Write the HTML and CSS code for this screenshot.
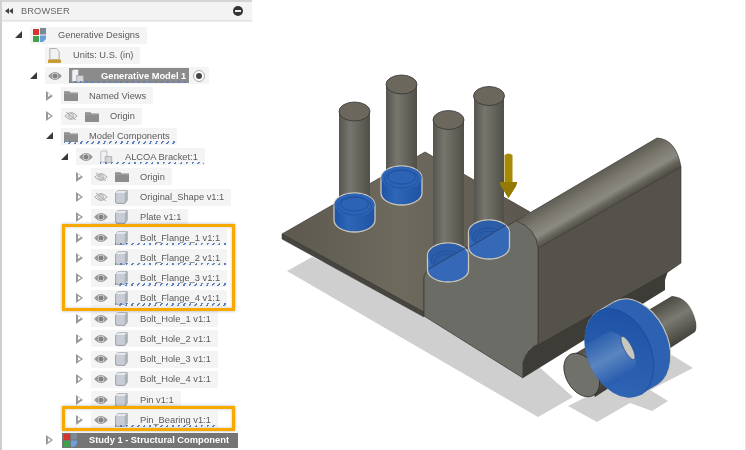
FILE: index.html
```html
<!DOCTYPE html>
<html lang="en">
<head>
<meta charset="utf-8">
<title>Browser</title>
<link rel="stylesheet" href="styles.css">
</head>
<body>
<svg class="defs" width="0" height="0" aria-hidden="true">
  <symbol id="eye" viewBox="0 0 14 10"><path d="M.2 5Q7-2.8 13.800 5 7 12.800.2 5Z" fill="#979797"/><circle cx="7" cy="5" r="3.200" fill="#dcdcdc"/><circle cx="7" cy="5" r="2.500" fill="#828282"/></symbol>
  <symbol id="eyeoff" viewBox="0 0 14 10"><path d="M.8 5Q7-2 13.200 5 7 12 .8 5Z" fill="#e4e4e4" stroke="#b2b2b2"/><circle cx="7" cy="5" r="2.400" fill="none" stroke="#b2b2b2"/><path d="M2 1 12 9" stroke="#aaa"/></symbol>
  <symbol id="folder" viewBox="0 0 14 11"><path d="M0 1.200h5.500l1 1.300H14V11H0Z" fill="#8d8d8d"/><path d="M0 3.400h14" stroke="#a5a5a5" stroke-width=".7"/></symbol>
  <symbol id="box" viewBox="0 0 13 14"><path d="M.6 3 3.200.6h9v9.600L9.800 13.400H1.800Q.6 13.400.6 12Z" fill="#c8cdd5" stroke="#8d9199" stroke-width=".8"/><path d="M.8 3H9.800L12 .8H3.200Z" fill="#e6e8ec"/><path d="M9.800 3 12 .8v9.300l-2.200 3.100Z" fill="#adb1b8"/></symbol>
  <symbol id="comp" viewBox="0 0 15 15"><path d="M1 1.500 3 .5h5v13H1Z" fill="#f1f1f3" stroke="#9a9da3" stroke-width=".7"/><path d="M6 7h7.500v7H6Z" fill="#d4d6da" stroke="#8f9298" stroke-width=".7"/></symbol>
  <symbol id="gd" viewBox="0 0 13 14"><path d="M0 1h6v6H0Z" fill="#d7332f"/><path d="M7 0h6v6.500H7Z" fill="#7b8a94"/><path d="M0 8h6v6H0Z" fill="#3fa14a"/><path d="M7 7.500h6V11l-3 3H7Z" fill="#6a9fd8"/></symbol>
  <symbol id="doc" viewBox="0 0 14 16"><path d="M2 .5h7l3 3v9H2Z" fill="#f2f2f2" stroke="#a3a3a3" stroke-width=".9"/><path d="M0 12.500h14V16H0Z" fill="#c99a2e"/></symbol>
</svg>
<main class="app">
  <section class="panel">
    <header class="head">
      <span class="rew"><i></i><i></i></span>
      <span class="title">BROWSER</span>
      <span class="min"></span>
    </header>
    <div class="tree">
      <div class="row d0"><span class="tri on"></span><span class="chip"><svg class="ic"><use href="#gd"/></svg><span>Generative Designs</span></span></div>
      <div class="row d1"><span class="tri none"></span><span class="chip"><svg class="ic doc"><use href="#doc"/></svg><span>Units: U.S. (in)</span></span></div>
      <div class="row d1"><span class="tri on"></span><span class="chip chip-gm"><svg class="eye"><use href="#eye"/></svg><span class="bar bar-gm wv"><svg class="ic ic-b"><use href="#comp"/></svg><span>Generative Model 1</span></span><span class="radio"></span></span></div>
      <div class="row d2"><span class="tri"></span><span class="chip"><svg class="ic fo"><use href="#folder"/></svg><span>Named Views</span></span></div>
      <div class="row d2"><span class="tri"></span><span class="chip"><svg class="eye"><use href="#eyeoff"/></svg><svg class="ic fo"><use href="#folder"/></svg><span>Origin</span></span></div>
      <div class="row d2"><span class="tri on"></span><span class="chip"><span class="wv"><svg class="ic fo"><use href="#folder"/></svg><span>Model Components</span></span></span></div>
      <div class="row d3"><span class="tri on"></span><span class="chip"><svg class="eye"><use href="#eye"/></svg><span class="wv"><svg class="ic"><use href="#comp"/></svg><span>ALCOA Bracket:1</span></span></span></div>
      <div class="row d4"><span class="tri"></span><span class="chip"><svg class="eye"><use href="#eyeoff"/></svg><svg class="ic fo"><use href="#folder"/></svg><span>Origin</span></span></div>
      <div class="row d4"><span class="tri"></span><span class="chip"><svg class="eye"><use href="#eyeoff"/></svg><svg class="ic"><use href="#box"/></svg><span>Original_Shape v1:1</span></span></div>
      <div class="row d4"><span class="tri"></span><span class="chip"><svg class="eye"><use href="#eye"/></svg><svg class="ic"><use href="#box"/></svg><span>Plate v1:1</span></span></div>
      <div class="group group-4">
        <div class="row d4"><span class="tri"></span><span class="chip"><svg class="eye"><use href="#eye"/></svg><span class="wv"><svg class="ic"><use href="#box"/></svg><span>Bolt_Flange_1 v1:1</span></span></span></div>
        <div class="row d4"><span class="tri"></span><span class="chip"><svg class="eye"><use href="#eye"/></svg><span class="wv"><svg class="ic"><use href="#box"/></svg><span>Bolt_Flange_2 v1:1</span></span></span></div>
        <div class="row d4"><span class="tri"></span><span class="chip"><svg class="eye"><use href="#eye"/></svg><span class="wv"><svg class="ic"><use href="#box"/></svg><span>Bolt_Flange_3 v1:1</span></span></span></div>
        <div class="row d4"><span class="tri"></span><span class="chip"><svg class="eye"><use href="#eye"/></svg><span class="wv"><svg class="ic"><use href="#box"/></svg><span>Bolt_Flange_4 v1:1</span></span></span></div>
      </div>
      <div class="row d4"><span class="tri"></span><span class="chip"><svg class="eye"><use href="#eye"/></svg><svg class="ic"><use href="#box"/></svg><span>Bolt_Hole_1 v1:1</span></span></div>
      <div class="row d4"><span class="tri"></span><span class="chip"><svg class="eye"><use href="#eye"/></svg><svg class="ic"><use href="#box"/></svg><span>Bolt_Hole_2 v1:1</span></span></div>
      <div class="row d4"><span class="tri"></span><span class="chip"><svg class="eye"><use href="#eye"/></svg><svg class="ic"><use href="#box"/></svg><span>Bolt_Hole_3 v1:1</span></span></div>
      <div class="row d4"><span class="tri"></span><span class="chip"><svg class="eye"><use href="#eye"/></svg><svg class="ic"><use href="#box"/></svg><span>Bolt_Hole_4 v1:1</span></span></div>
      <div class="row d4"><span class="tri"></span><span class="chip"><svg class="eye"><use href="#eye"/></svg><svg class="ic"><use href="#box"/></svg><span>Pin v1:1</span></span></div>
      <div class="group group-1">
        <div class="row d4"><span class="tri"></span><span class="chip"><svg class="eye"><use href="#eye"/></svg><span class="wv"><svg class="ic"><use href="#box"/></svg><span>Pin_Bearing v1:1</span></span></span></div>
      </div>
      <div class="row d2"><span class="tri"></span><span class="bar bar-study"><svg class="ic ic-s"><use href="#gd"/></svg><span>Study 1 - Structural Component</span></span></div>
    </div>
  </section>
  <div class="scene">
    <svg class="model" viewBox="252 0 493 450" width="493" height="450" role="img" aria-label="Bracket model">
      <defs>
        <linearGradient id="cyl" x1="0" x2="1" y1="0" y2="0"><stop offset="0" stop-color="#55544d"/><stop offset=".35" stop-color="#77766e"/><stop offset=".6" stop-color="#69685f"/><stop offset="1" stop-color="#504f48"/></linearGradient>
        <linearGradient id="rib" gradientUnits="userSpaceOnUse" x1="583" y1="176" x2="604" y2="212"><stop offset="0" stop-color="#55534b"/><stop offset=".4" stop-color="#7a776d"/><stop offset=".7" stop-color="#8b8a82"/><stop offset=".85" stop-color="#65635a"/><stop offset="1" stop-color="#4d4b43"/></linearGradient>
        <linearGradient id="plate" gradientUnits="userSpaceOnUse" x1="300" y1="230" x2="520" y2="230"><stop offset="0" stop-color="#5f5b50"/><stop offset=".45" stop-color="#6f6a5e"/><stop offset="1" stop-color="#5c584f"/></linearGradient>
        <linearGradient id="pinG" gradientUnits="userSpaceOnUse" x1="622" y1="324" x2="645" y2="364"><stop offset="0" stop-color="#4b4942"/><stop offset=".45" stop-color="#7b7a72"/><stop offset="1" stop-color="#403e38"/></linearGradient>
        <linearGradient id="blueB" x1="0" x2="1" y1="0" y2="0"><stop offset="0" stop-color="#1d52a6"/><stop offset=".35" stop-color="#2f66b6"/><stop offset="1" stop-color="#1f53a3"/></linearGradient>
        <linearGradient id="ring" gradientUnits="userSpaceOnUse" x1="590" y1="320" x2="670" y2="370"><stop offset="0" stop-color="#1d52a6"/><stop offset="1" stop-color="#3166b5"/></linearGradient>
        <linearGradient id="thru" gradientUnits="userSpaceOnUse" x1="598" y1="338" x2="620" y2="378"><stop offset="0" stop-color="#2f62ae"/><stop offset=".5" stop-color="#5a85c0"/><stop offset="1" stop-color="#2a5eae"/></linearGradient>
        <clipPath id="c3"><path d="M426 270 469 245V230H420V280Z"/></clipPath>
        <clipPath id="c4"><path d="M468 248 507 224V210H460V255Z"/></clipPath>
        <clipPath id="face"><ellipse cx="619.500" cy="353" rx="47" ry="32" transform="rotate(65 619.500 353)"/></clipPath>
      </defs>

      <path d="M312 257 287 271 538 417 573 397 520 350Z" fill="#cfcfcf"/>
      <path d="M568 406 597 422 630 403 652 411 668 401 650 390 693 368 672 355 600 390Z" fill="#cfcfcf"/>

      <path d="M282 234 425 152 530 212 516 221 424 276V313Z" fill="url(#plate)" stroke="#3c3a35" stroke-width=".7"/>
      <path d="M282 234V239L424 317V312Z" fill="#47453f" stroke="#34322e" stroke-width=".5"/>

      <path d="M538 344 668 271 665 280V290L523 378V362Q527 347 538 344Z" fill="#3e3c37"/>
      <path d="M538 248 681 167V263L668 272 538 345Z" fill="#55524b" stroke="#34322e" stroke-width=".6"/>
      <path d="M516 221 657 138Q676 139 681 167L538 248Q536 228 516 221Z" fill="url(#rib)" stroke="#3a3833" stroke-width=".7"/>
      <path d="M424 278Q424 274 428 270L516 221Q536 228 538 248V344Q526 347 523 362V378L424 316Z" fill="#6b6c65" stroke="#3a3833" stroke-width=".7"/>

      <g class="posts">
        <rect x="339" y="111" width="31" height="100" fill="url(#cyl)"/>
        <ellipse cx="354.500" cy="111.500" rx="15.500" ry="9.500" fill="#6c675d" stroke="#333" stroke-width=".8"/>
        <rect x="386" y="84" width="31" height="90" fill="url(#cyl)"/>
        <ellipse cx="401.500" cy="84.500" rx="15.500" ry="9.500" fill="#6c675d" stroke="#333" stroke-width=".8"/>
        <rect x="433" y="120" width="31" height="130" fill="url(#cyl)"/>
        <ellipse cx="448.500" cy="120" rx="15.500" ry="9.500" fill="#6c675d" stroke="#333" stroke-width=".8"/>
        <rect x="474" y="96" width="30" height="130" fill="url(#cyl)"/>
        <ellipse cx="489" cy="96" rx="15.500" ry="9.500" fill="#6c675d" stroke="#333" stroke-width=".8"/>
      </g>

      <path d="M334 205V220A20.500 12 0 0 0 375 220V205A20.500 12 0 0 0 334 205Z" fill="url(#blueB)" stroke="#c9c6ba" stroke-width="1.300"/>
      <ellipse cx="354.500" cy="205" rx="20" ry="11.500" fill="#2d63b4"/>
      <ellipse cx="354.500" cy="206" rx="17" ry="9" fill="none" stroke="#1b4c9a" stroke-width=".7"/>
      <ellipse cx="354.500" cy="204" rx="14" ry="7" fill="none" stroke="#1b4c9a" stroke-width=".7"/>

      <path d="M381 178V193A20.500 12 0 0 0 422 193V178A20.500 12 0 0 0 381 178Z" fill="url(#blueB)" stroke="#c9c6ba" stroke-width="1.300"/>
      <ellipse cx="401.500" cy="178" rx="20" ry="11.500" fill="#2d63b4"/>
      <ellipse cx="401.500" cy="179" rx="17" ry="9" fill="none" stroke="#1b4c9a" stroke-width=".7"/>
      <ellipse cx="401.500" cy="177" rx="14" ry="7" fill="none" stroke="#1b4c9a" stroke-width=".7"/>

      <path d="M427.500 255V270A20.500 12 0 0 0 468.500 270V255A20.500 12 0 0 0 427.500 255Z" fill="#3568b6" stroke="#c9c6ba" stroke-width="1.300"/>
      <g clip-path="url(#c3)"><ellipse cx="448" cy="256" rx="20" ry="12.500" fill="#2c5da9"/><ellipse cx="448" cy="261" rx="17" ry="10" fill="none" stroke="#1b4c9a" stroke-width=".6"/><ellipse cx="448" cy="263" rx="14" ry="9" fill="none" stroke="#1b4c9a" stroke-width=".6"/></g>
      <path d="M428.500 269 467 247" stroke="#24395f" stroke-width=".8"/>

      <path d="M468.500 232V247A20.500 12 0 0 0 509.500 247V232A20.500 12 0 0 0 468.500 232Z" fill="#3568b6" stroke="#c9c6ba" stroke-width="1.300"/>
      <g clip-path="url(#c4)"><ellipse cx="489" cy="233" rx="20" ry="12.500" fill="#2c5da9"/><ellipse cx="489" cy="238" rx="17" ry="10" fill="none" stroke="#1b4c9a" stroke-width=".6"/><ellipse cx="489" cy="240" rx="14" ry="9" fill="none" stroke="#1b4c9a" stroke-width=".6"/></g>
      <path d="M470 247 506 225" stroke="#24395f" stroke-width=".8"/>

      <path d="M504.500 155Q508.500 152 512.500 155V182H517L516 186 508.500 198 501 186 500 182H504.500Z" fill="#a68a04"/>
      <path d="M500 182H517L516 186 508.500 198 501 186Z" fill="#947a03"/>

      <path d="M576 353 672 296Q690 297 696 322 697 329 695 332L595 397Z" fill="url(#pinG)"/>
      <ellipse cx="581.700" cy="375" rx="23.500" ry="15.500" transform="rotate(60 581.700 375)" fill="#70716b" stroke="#2f2e2a" stroke-width=".8"/>

      <path d="M641.200 394.600 658.200 384.600A47 32 65 0 0 614.800 301.400L597.800 311.400A47 32 65 0 0 641.200 394.600Z" fill="#2d61b1" stroke="#cbc9bf" stroke-width="1.100"/>
      <ellipse cx="619.500" cy="353" rx="47" ry="32" transform="rotate(65 619.500 353)" fill="url(#ring)"/>
      <path d="M597.800 311.400A47 32 65 0 1 641.200 394.600" fill="none" stroke="#1a4b98" stroke-width=".7"/>
      <path d="M584 345 610 331Q628 335 636 360 636 368 633 370L608 388 590 370Z" fill="url(#thru)" clip-path="url(#face)"/>
      <ellipse cx="628" cy="348" rx="13" ry="4" transform="rotate(62 628 348)" fill="#c9c8bf" stroke="#1f4a8e" stroke-width=".7"/>
    </svg>
  </div>
</main>
</body>
</html>
```
FILE: styles.css
```css
*, *::before, *::after { box-sizing: border-box; }
html, body { margin: 0; padding: 0; background: #fff; }
body { width: 746px; height: 450px; overflow: hidden; font-family: "Liberation Sans", Arial, sans-serif; }
.defs { position: absolute; }
.app { display: flex; width: 746px; height: 450px; }

.panel { width: 252px; flex: none; border-left: 2px solid #cfcfcf; border-top: 2px solid #d4d4d4; filter: blur(.35px); }
.head { height: 19px; display: flex; align-items: center; background: #f3f3f3; border-bottom: 1px solid #e2e2e2; padding: 0 8px 0 3px; color: #666; font-size: 9.300px; box-shadow: 0 1px 1px #eee; }
.rew { display: flex; width: 16px; }
.rew i { width: 0; height: 0; border: 3px solid transparent; border-left: 0; border-right: 4px solid #444; }
.title { flex: 1; letter-spacing: .1px; }
.min { width: 10px; height: 10px; border-radius: 50%; background: #333; position: relative; margin-right: 1px; }
.min::after { content: ""; position: absolute; left: 2px; right: 2px; top: 4px; height: 1.500px; background: #eee; }

.tree { padding-top: 4px; }
.row { height: 20.250px; display: flex; align-items: center; font-size: 9.300px; color: #5a5a5a; white-space: nowrap; }
.d0 { padding-left: 13px; }
.d1 { padding-left: 28px; }
.d2 { padding-left: 44px; }
.d3 { padding-left: 59px; }
.d4 { padding-left: 74px; }

.tri { width: 15px; height: 10px; flex: none; position: relative; }
.tri::before { content: ""; position: absolute; left: 0; top: 0; width: 0; height: 0; border-left: 7px solid #999; border-top: 5px solid transparent; border-bottom: 5px solid transparent; }
.tri::after { content: ""; position: absolute; left: 1.500px; top: 2.500px; width: 0; height: 0; border-left: 3.300px solid #fff; border-top: 2.500px solid transparent; border-bottom: 2.500px solid transparent; }
.tri.on::before { left: 0; top: 1px; border: 0; border-right: 7px solid #3a3a3a; border-top: 7px solid transparent; }
.tri.on::after, .tri.none::before, .tri.none::after { display: none; }

.chip { height: 17px; display: inline-flex; align-items: center; background: #f4f4f4; padding: 0 7px 0 3px; }
.eye { width: 14px; height: 10px; margin-right: 7px; flex: none; }
.ic { width: 13px; height: 14px; margin-right: 12px; flex: none; }
.ic.doc { width: 13px; height: 15px; }
.ic.fo { width: 14px; height: 11px; margin-right: 11px; }
.ic-b { margin-right: 16px; width: 14px; margin-left: 2px; }
.ic-s { margin: 0 12px 0 2px; }

.wv { position: relative; display: inline-flex; align-items: center; height: 100%; }
.wv::after { content: ""; position: absolute; left: 0; right: -6px; bottom: 1px; height: 2.500px; background: repeating-linear-gradient(120deg, #5a80bd 0 1.500px, transparent 1.500px 5px); }

.chip-gm { padding-right: 4px; }
.bar { display: inline-flex; align-items: center; color: #fff; font-weight: 700; }
.bar-gm { height: 15px; width: 120px; background: #8b8b8b; margin-right: 4px; }
.bar-gm.wv::after { right: 0; bottom: 0; }
.bar-study { height: 15px; width: 176px; margin-left: 1px; background: #757575; }
.radio { width: 12px; height: 12px; border-radius: 50%; border: 1px solid #aaa; background: #fff; position: relative; }
.radio::after { content: ""; position: absolute; left: 2px; top: 2px; width: 6px; height: 6px; border-radius: 50%; background: #444; }

.group { position: relative; }
.group::after { content: ""; position: absolute; left: 60px; width: 173px; border: 3px solid #f8a900; box-shadow: 0 0 3px rgba(0,0,0,.3), inset 0 0 3px rgba(0,0,0,.25); }
.group-4::after { top: -4px; bottom: -2px; }
.group-1::after { top: -4px; bottom: -1px; }

.scene { flex: 1; border-right: 1px solid #e2e2e2; }
.model { display: block; filter: blur(.3px); }
```
